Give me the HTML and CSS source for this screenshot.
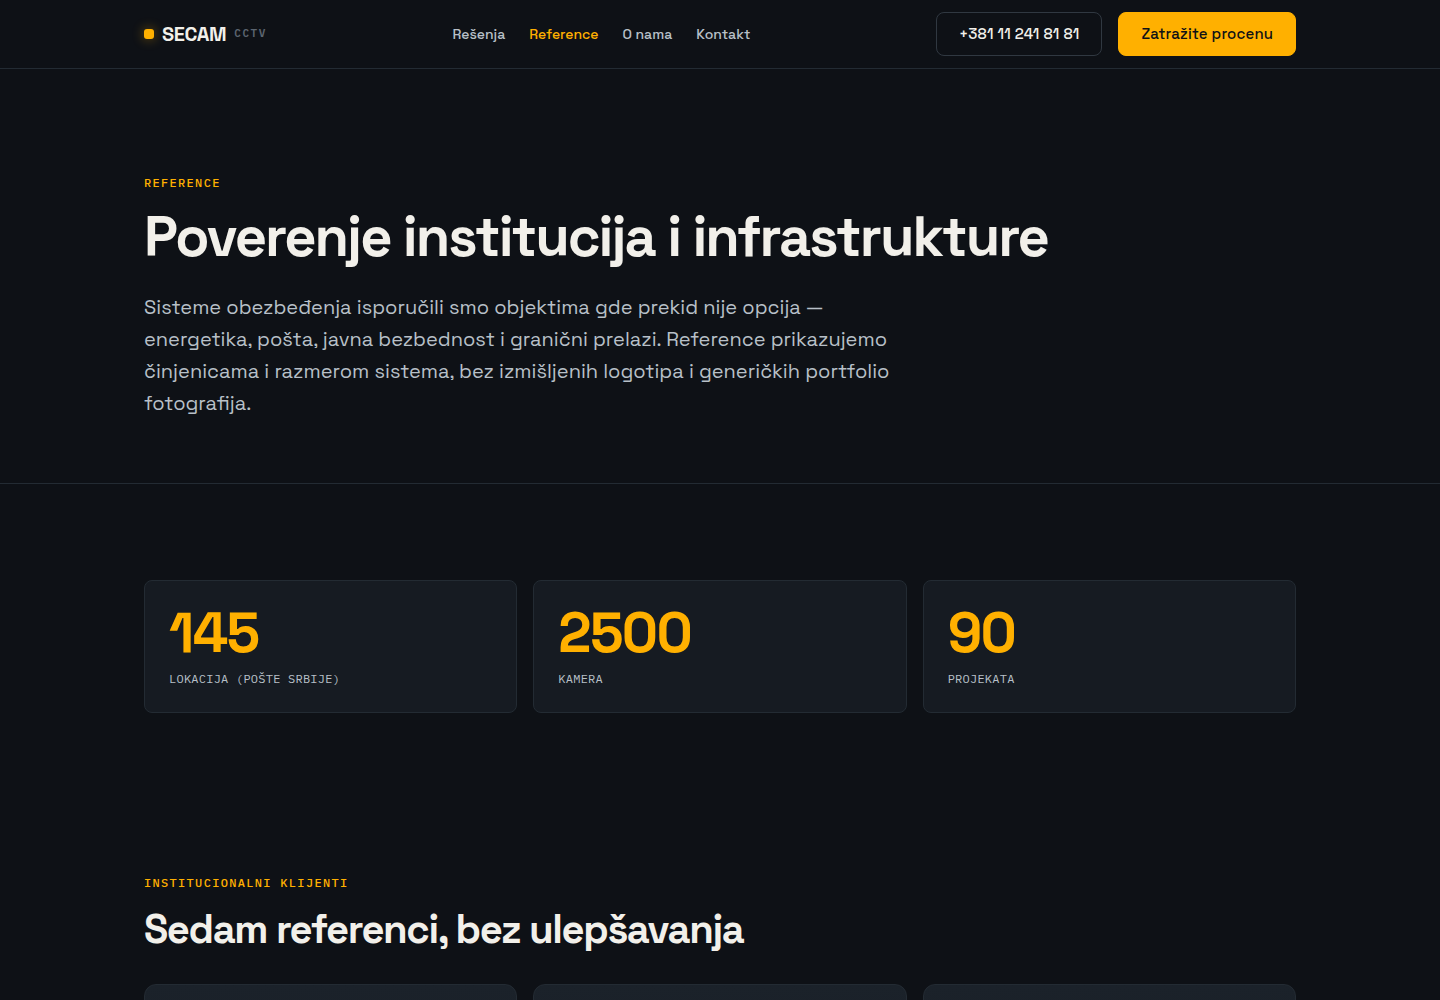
FILE: index.html
```html
<!DOCTYPE html>
<html lang="sr-Latn">
<head>
    <meta charset="UTF-8">
    <meta name="viewport" content="width=device-width, initial-scale=1.0">
    <title>Reference | SECAM CCTV</title>
    <link rel="stylesheet" href="styles.css">
</head>
<body>
    <header class="site-header">
        <div class="container header-inner">
            <a class="logo" href="#">
                <span class="logo-dot"></span>
                <span class="logo-name">SECAM</span>
                <span class="logo-tag">CCTV</span>
            </a>
            <nav class="nav">
                <a href="#">Rešenja</a>
                <a class="active" href="#">Reference</a>
                <a href="#">O nama</a>
                <a href="#">Kontakt</a>
            </nav>
            <div class="header-actions">
                <a class="btn btn-outline" href="tel:+381112418181">+381 11 241 81 81</a>
                <a class="btn btn-primary" href="#">Zatražite procenu</a>
            </div>
        </div>
    </header>

    <main>
        <section class="hero">
            <div class="container">
                <p class="eyebrow">REFERENCE</p>
                <h1>Poverenje institucija i infrastrukture</h1>
                <p class="lead">Sisteme obezbeđenja isporučili smo objektima gde prekid nije opcija — energetika, pošta, javna bezbednost i granični prelazi. Reference prikazujemo činjenicama i razmerom sistema, bez izmišljenih logotipa i generičkih portfolio fotografija.</p>
            </div>
        </section>

        <section class="stats">
            <div class="container grid">
                <div class="stat">
                    <div class="stat-value">145</div>
                    <div class="stat-label">LOKACIJA (POŠTE SRBIJE)</div>
                </div>
                <div class="stat">
                    <div class="stat-value">2500</div>
                    <div class="stat-label">KAMERA</div>
                </div>
                <div class="stat">
                    <div class="stat-value">90</div>
                    <div class="stat-label">PROJEKATA</div>
                </div>
            </div>
        </section>

        <section class="clients">
            <div class="container">
                <p class="eyebrow">INSTITUCIONALNI KLIJENTI</p>
                <h2>Sedam referenci, bez ulepšavanja</h2>
                <div class="grid">
                    <article class="client-card"></article>
                    <article class="client-card"></article>
                    <article class="client-card"></article>
                </div>
            </div>
        </section>
    </main>
</body>
</html>
```
FILE: styles.css
```css
:root {
    --bg: #0e1116;
    --surface: #161b22;
    --line: #232b33;
    --line-strong: #303841;
    --text: #f2f0ea;
    --muted: #b8c0c8;
    --dim: #5c6570;
    --accent: #ffb000;
    --sans: "Space Grotesk", Inter, sans-serif;
    --mono: "IBM Plex Mono", "Liberation Mono", monospace;
}
* {
    box-sizing: border-box;
}
body {
    margin: 0;
    background-color: var(--bg);
    color: var(--text);
    font-family: var(--sans);
    font-size: 16px;
    line-height: 1.6;
    text-rendering: optimizeLegibility;
}
h1, h2, p {
    margin: 0;
}
a {
    color: inherit;
    text-decoration: none;
}
.container {
    max-width: 1200px;
    margin: 0 auto;
    padding: 0 24px;
}

/* header */
.site-header {
    position: sticky;
    top: 0;
    background-color: var(--bg);
    border-bottom: 1px solid var(--line);
}
.header-inner {
    display: flex;
    align-items: center;
    justify-content: space-between;
    padding-top: 12px;
    padding-bottom: 12px;
}
.logo {
    display: flex;
    align-items: center;
    gap: 8px;
}
.logo-dot {
    width: 10px;
    height: 10px;
    border-radius: 3px;
    background-color: var(--accent);
    box-shadow: 0 0 12px rgba(255, 176, 0, 0.45);
}
.logo-name {
    font-size: 20px;
    font-weight: 700;
    letter-spacing: -0.02em;
}
.logo-tag {
    font-family: var(--mono);
    font-size: 11px;
    font-weight: 600;
    letter-spacing: 0.14em;
    color: var(--dim);
}
.nav {
    display: flex;
    gap: 24px;
    font-size: 14px;
    font-weight: 500;
    color: var(--muted);
}
.nav a:hover,
.nav .active {
    color: var(--accent);
}
.header-actions {
    display: flex;
    gap: 16px;
}
.btn {
    display: flex;
    align-items: center;
    height: 44px;
    padding: 0 22px;
    border: 1px solid transparent;
    border-radius: 8px;
    font-size: 15px;
    font-weight: 500;
    letter-spacing: 0.01em;
    white-space: nowrap;
}
.btn-outline {
    border-color: var(--line-strong);
}
.btn-primary {
    background-color: var(--accent);
    border-color: var(--accent);
    color: var(--bg);
}

/* hero */
.hero {
    padding: 104px 0 64px;
    border-bottom: 1px solid var(--line);
}
.eyebrow {
    margin-bottom: 14px;
    font-family: var(--mono);
    font-size: 12px;
    font-weight: 500;
    line-height: 20px;
    letter-spacing: 0.11em;
    color: var(--accent);
}
h1 {
    margin-bottom: 24px;
    font-size: 56px;
    font-weight: 600;
    line-height: 60px;
    letter-spacing: -0.035em;
}
.lead {
    max-width: 768px;
    font-size: 20px;
    line-height: 32px;
    color: var(--muted);
}

/* stats */
.stats {
    padding: 96px 0;
}
.grid {
    display: grid;
    grid-template-columns: repeat(3, 1fr);
    gap: 16px;
}
.stat {
    padding: 24px;
    background-color: var(--surface);
    border: 1px solid var(--line);
    border-radius: 8px;
}
.stat-value {
    margin-bottom: 8px;
    font-size: 56px;
    font-weight: 700;
    line-height: 56px;
    letter-spacing: -0.03em;
    color: var(--accent);
}
.stat-label {
    font-family: var(--mono);
    font-size: 12px;
    line-height: 19px;
    letter-spacing: 0.02em;
    color: var(--muted);
}

/* clients */
.clients {
    padding: 64px 0 96px;
}
h2 {
    margin-bottom: 32px;
    font-size: 40px;
    font-weight: 600;
    line-height: 45px;
    letter-spacing: -0.035em;
}
.client-card {
    padding: 96px 24px;
    background: linear-gradient(#1b222a, var(--surface));
    border: 1px solid var(--line);
    border-radius: 12px;
}
```
